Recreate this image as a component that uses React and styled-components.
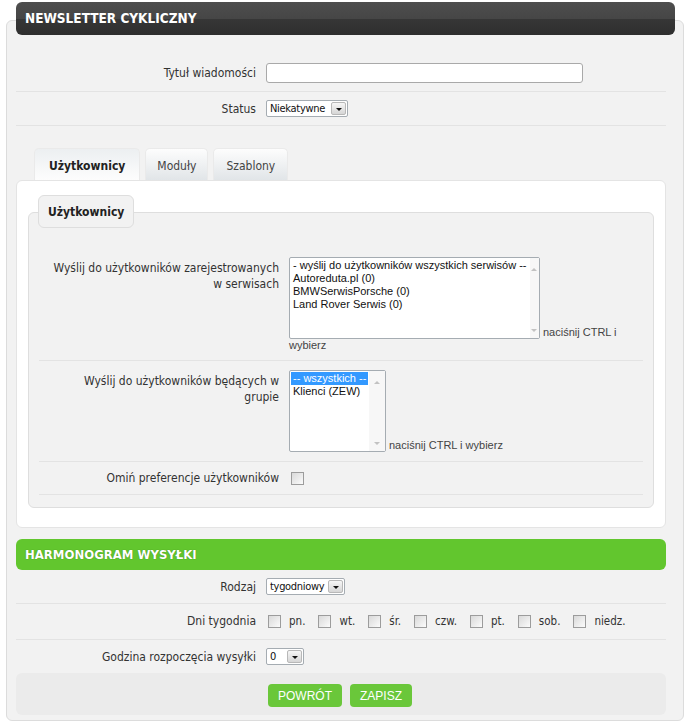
import React from 'react';
import styled, { createGlobalStyle } from 'styled-components';

const GlobalStyle = createGlobalStyle`
  html, body {
    margin: 0;
    padding: 0;
    background: #fff;
  }
  body {
    font-family: 'DejaVu Sans Condensed', 'DejaVu Sans', sans-serif;
    font-size: 12px;
    color: #333;
  }
`

const Page = styled.div`
  padding: 2px 0 0 6px;
`

const Panel = styled.div`
  box-sizing: border-box;
  width: 678px;
  margin-top: 18px;
  padding: 0 17px 5px 9px;
  background: #f2f2f2;
  border: 1px solid #dcdcdc;
  border-radius: 6px;
`

const DarkHeader = styled.div`
  height: 33px;
  margin: -19px -9px 20px 0;
  padding-left: 9px;
  line-height: 33px;
  border-radius: 6px;
  background: linear-gradient(#4e4e4e 0%, #464646 50%, #363636 52%, #2e2e2e 100%);
  color: #fff;
  font-weight: bold;
  font-size: 13.5px;
`

const GreenHeader = styled.div`
  height: 31px;
  margin-top: 11px;
  padding-left: 9px;
  line-height: 31px;
  border-radius: 6px;
  background: #62c62e;
  color: #fff;
  font-weight: bold;
  font-size: 13px;
  text-shadow: 0 0 1px rgba(40, 90, 10, .7);
`

const Row = styled.div`
  display: grid;
  grid-template-columns: 240px 1fr;
  column-gap: 10px;
  align-items: ${p => (p.$top ? 'start' : 'center')};
  padding: ${p => p.$pad || '8px 0'};
  border-bottom: ${p => (p.$last ? 'none' : '1px solid #e3e3e3')};
`

const Label = styled.div`
  text-align: right;
  line-height: 16px;
  padding-top: ${p => p.$offset || 0};
`

const TextInput = styled.div`
  box-sizing: border-box;
  width: 317px;
  height: 20px;
  background: #fff;
  border: 1px solid #a9a9a9;
  border-radius: 3px;
`

const SelectBox = styled.div`
  box-sizing: border-box;
  display: inline-flex;
  vertical-align: middle;
  align-items: center;
  justify-content: space-between;
  width: ${p => p.$width}px;
  height: 17px;
  padding-left: 3px;
  background: #fff;
  border: 1px solid #a5acb2;
  border-radius: 2px;
  font-size: 11px;
  letter-spacing: -0.3px;
  color: #111;
`

const SelectArrow = styled.span`
  box-sizing: border-box;
  display: flex;
  align-items: center;
  justify-content: center;
  width: 15px;
  height: 13px;
  margin-right: 1px;
  border: 1px solid #b8b8b8;
  border-radius: 2px;
  background: linear-gradient(#f6f6f6, #d6d6d6);

  &::after {
    content: '';
    margin-top: 2px;
    border-left: 3px solid transparent;
    border-right: 3px solid transparent;
    border-top: 3px solid #111;
  }
`

const TabBar = styled.div`
  display: flex;
  gap: 5px;
  margin-top: 22px;
  padding-left: 18px;
`

const Tab = styled.div`
  height: 32px;
  padding: 0 ${p => p.$pad}px;
  line-height: 34px;
  border-radius: 5px 5px 0 0;
  border: 1px solid #eaeaea;
  border-bottom: none;
  box-sizing: border-box;
  font-weight: ${p => (p.$active ? 'bold' : 'normal')};
  color: ${p => (p.$active ? '#222' : '#444')};
  background: ${p => (p.$active
    ? 'linear-gradient(#eceff1, #fdfdfd)'
    : 'linear-gradient(#fdfdfd, #e1e5e8)')};
`

const TabPanel = styled.div`
  padding: 14px 11px 19px;
  background: #fff;
  border: 1px solid #e4e4e4;
  border-radius: 6px;
`

const Legend = styled.div`
  position: relative;
  z-index: 1;
  width: fit-content;
  height: 33px;
  margin: 0 0 -16px 10px;
  padding: 0 9px;
  box-sizing: border-box;
  line-height: 33px;
  background: #f2f2f2;
  border: 1px solid #dedede;
  border-radius: 6px;
  font-weight: bold;
  color: #222;
`

const FieldBox = styled.div`
  padding: 34px 10px 12px;
  background: #f2f2f2;
  border: 1px solid #dedede;
  border-radius: 6px;
`

const Control = styled.div`
  font-family: 'Liberation Sans', Arial, sans-serif;
  font-size: 11px;
  line-height: 13px;
  color: #444;
`

const ListBox = styled.div`
  box-sizing: border-box;
  display: inline-flex;
  vertical-align: bottom;
  width: ${p => p.$width}px;
  height: 82px;
  margin-right: 3px;
  background: #fff;
  border: 1px solid #a5acb2;
  border-radius: 2px;
  color: #111;
`

const Options = styled.div`
  flex: 1;
  padding: 1px 1px 0;
`

const Option = styled.div`
  padding: 0 2px;
  line-height: 13px;
  background: ${p => (p.$selected ? '#3399ff' : 'transparent')};
  color: ${p => (p.$selected ? '#fff' : '#111')};
  white-space: nowrap;
`

const ScrollTrack = styled.div`
  display: flex;
  flex-direction: column;
  justify-content: space-between;
  align-items: center;
  width: 17px;
  padding: 10px 0 6px;
  box-sizing: border-box;
  background: #f7f7f7;

  &::before, &::after {
    content: '';
    border-left: 3px solid transparent;
    border-right: 3px solid transparent;
  }
  &::before {
    border-bottom: 3px solid #c2c2c2;
  }
  &::after {
    border-top: 3px solid #c2c2c2;
  }
`

const Check = styled.span`
  box-sizing: border-box;
  display: inline-block;
  vertical-align: middle;
  width: 13px;
  height: 13px;
  margin-left: ${p => (p.$flush ? 0 : 2)}px;
  border: 1px solid #9c9c9c;
  background: linear-gradient(135deg, #d9d9d9, #fbfbfb);
`

const DayList = styled.div`
  display: flex;
  align-items: center;
  gap: 13px;
  padding-left: 2px;
  font-size: 11.5px;
`

const Day = styled.span`
  display: inline-flex;
  align-items: center;
  gap: 8px;
`

const ButtonBar = styled.div`
  display: flex;
  gap: 8px;
  padding: 11px 0 8px 252px;
  background: #ebebeb;
  border-radius: 6px;
`

const Button = styled.button`
  height: 23px;
  padding: 0 10px;
  border: none;
  border-radius: 4px;
  background: #6ac73a;
  color: #fff;
  font-family: 'Liberation Sans', Arial, sans-serif;
  font-size: 12px;
`

const Select = ({ width, children }) => (
  <SelectBox $width={width}>
    {children}
    <SelectArrow />
  </SelectBox>
)

const List = ({ width, items, selected }) => (
  <ListBox $width={width}>
    <Options>
      {items.map((item, i) => (
        <Option key={item} $selected={i === selected}>{item}</Option>
      ))}
    </Options>
    <ScrollTrack />
  </ListBox>
)

const services = [
  '- wyślij do użytkowników wszystkich serwisów --',
  'Autoreduta.pl (0)',
  'BMWSerwisPorsche (0)',
  'Land Rover Serwis (0)'
]

const groups = ['-- wszystkich --', 'Klienci (ZEW)']

const days = ['pn.', 'wt.', 'śr.', 'czw.', 'pt.', 'sob.', 'niedz.']

export default function App() {
  return (
    <Page>
      <GlobalStyle />
      <Panel>
        <DarkHeader>NEWSLETTER CYKLICZNY</DarkHeader>

        <Row>
          <Label>Tytuł wiadomości</Label>
          <TextInput />
        </Row>
        <Row>
          <Label>Status</Label>
          <div><Select width={82}>Niekatywne</Select></div>
        </Row>

        <TabBar>
          <Tab $active $pad={14}>Użytkownicy</Tab>
          <Tab $pad={11}>Moduły</Tab>
          <Tab $pad={12}>Szablony</Tab>
        </TabBar>
        <TabPanel>
          <Legend>Użytkownicy</Legend>
          <FieldBox>
            <Row $top $pad="10px 0 8px">
              <Label $offset="3px">Wyślij do użytkowników zarejestrowanych<br />w serwisach</Label>
              <Control>
                <List width={251} items={services} />
                naciśnij CTRL i wybierz
              </Control>
            </Row>
            <Row $top $pad="9px 0 9px">
              <Label $offset="3px">Wyślij do użytkowników będących w<br />grupie</Label>
              <Control>
                <List width={97} items={groups} selected={0} />
                naciśnij CTRL i wybierz
              </Control>
            </Row>
            <Row $pad="8px 0">
              <Label>Omiń preferencje użytkowników</Label>
              <div><Check /></div>
            </Row>
          </FieldBox>
        </TabPanel>

        <GreenHeader>HARMONOGRAM WYSYŁKI</GreenHeader>

        <Row>
          <Label>Rodzaj</Label>
          <div><Select width={79}>tygodniowy</Select></div>
        </Row>
        <Row $pad="9px 0 10px">
          <Label>Dni tygodnia</Label>
          <DayList>
            {days.map(day => (
              <Day key={day}><Check $flush />{day}</Day>
            ))}
          </DayList>
        </Row>
        <Row $last>
          <Label>Godzina rozpoczęcia wysyłki</Label>
          <div><Select width={38}>0</Select></div>
        </Row>

        <ButtonBar>
          <Button>POWRÓT</Button>
          <Button>ZAPISZ</Button>
        </ButtonBar>
      </Panel>
    </Page>
  )
}
